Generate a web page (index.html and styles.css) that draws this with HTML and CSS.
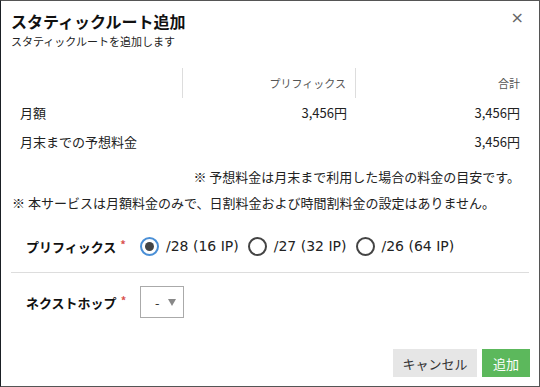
FILE: index.html
```html
<!DOCTYPE html>
<html lang="ja">
<head>
    <meta charset="UTF-8">
    <title>スタティックルート追加</title>
    <link rel="stylesheet" href="styles.css">
</head>
<body>
    <div class="dialog">
        <div class="dialog-header">
            <h2>スタティックルート追加</h2>
            <p class="subtitle">スタティックルートを追加します</p>
            <span class="close">&times;</span>
        </div>

        <!-- Price table -->
        <div class="price-table">
            <div class="cell head"></div>
            <div class="cell head num">プリフィックス</div>
            <div class="cell head num last">合計</div>

            <div class="cell">月額</div>
            <div class="cell num">3,456円</div>
            <div class="cell num last">3,456円</div>

            <div class="cell">月末までの予想料金</div>
            <div class="cell num"></div>
            <div class="cell num last">3,456円</div>
        </div>

        <p class="note note-right">※ 予想料金は月末まで利用した場合の料金の目安です。</p>
        <p class="note">※ 本サービスは月額料金のみで、日割料金および時間割料金の設定はありません。</p>

        <!-- Form -->
        <div class="form-row bordered">
            <label class="form-label">プリフィックス<span class="req">*</span></label>
            <div class="radio-group">
                <label class="radio"><input type="radio" name="prefix" checked><span>/28 (16 IP)</span></label>
                <label class="radio"><input type="radio" name="prefix"><span>/27 (32 IP)</span></label>
                <label class="radio"><input type="radio" name="prefix"><span>/26 (64 IP)</span></label>
            </div>
        </div>
        <div class="form-row">
            <label class="form-label">ネクストホップ<span class="req">*</span></label>
            <div class="select-box">
                <span class="select-value">-</span>
                <span class="caret"></span>
            </div>
        </div>

        <div class="dialog-footer">
            <button class="btn btn-cancel">キャンセル</button>
            <button class="btn btn-add">追加</button>
        </div>
    </div>
</body>
</html>
```

FILE: styles.css
```css
body {
    margin: 0;
    padding: 0;
    background: #fff;
    font-family: "Noto Sans CJK JP", "Noto Sans", sans-serif;
    font-size: 13px;
    color: #222;
}
.dialog {
    position: relative;
    width: 540px;
    height: 387px;
    box-sizing: border-box;
    border: 1px solid #555;
    border-left-color: #1a1f24;
    background: #fff;
    display: flex;
    flex-direction: column;
}
.dialog-header {
    position: relative;
    padding: 10px 10px 0 10px;
}
.dialog-header h2 {
    margin: 0 0 3px 0;
    font-size: 16px;
    line-height: 20px;
    font-weight: bold;
    color: #111;
}
.subtitle {
    margin: 0;
    font-size: 11px;
    line-height: 14px;
    color: #222;
}
.close {
    position: absolute;
    top: 8px;
    right: 15px;
    font-family: "DejaVu Sans", sans-serif;
    font-size: 16px;
    line-height: 18px;
    color: #666;
}
.price-table {
    display: grid;
    grid-template-columns: 172px 173px 1fr;
    margin: 20px 10px 0 10px;
}
.cell {
    height: 29px;
    line-height: 29px;
    padding: 0 9px;
    white-space: nowrap;
}
.cell.num {
    text-align: right;
}
.cell.head {
    height: 30px;
    line-height: 30px;
    font-size: 11px;
    color: #555;
    border-right: 1px solid #ddd;
}
.cell.head.last {
    border-right: none;
}
.note {
    margin: 0;
    line-height: 26px;
    padding: 0 10px 0 11px;
}
.note-right {
    text-align: right;
    margin-top: 8px;
    padding-right: 19px;
}
.form-row {
    display: flex;
    align-items: center;
    margin: 0 10px;
    padding-left: 15px;
}
.form-row.bordered {
    height: 52px;
    margin-top: 4px;
    border-bottom: 1px solid #ddd;
}
.form-row + .form-row {
    margin-top: 13px;
}
.form-label {
    width: 114px;
    font-weight: bold;
    color: #111;
}
.req {
    color: #d9534f;
    font-size: 11px;
    margin-left: 4px;
    vertical-align: 3px;
}
.radio-group {
    display: flex;
    gap: 9px;
}
.radio {
    display: flex;
    align-items: center;
    gap: 7px;
}
.radio span {
    font-family: "DejaVu Sans", sans-serif;
    font-size: 14px;
    color: #222;
}
.radio input {
    appearance: none;
    -webkit-appearance: none;
    margin: 0;
    width: 19px;
    height: 19px;
    border: 2px solid #444;
    border-radius: 50%;
    box-sizing: border-box;
    display: flex;
    align-items: center;
    justify-content: center;
}
.radio input:checked {
    border-color: #4a8fd6;
}
.radio input:checked::after {
    content: "";
    width: 9px;
    height: 9px;
    border-radius: 50%;
    background: #444;
}
.select-box {
    width: 44px;
    height: 32px;
    box-sizing: border-box;
    border: 1px solid #aaa;
    display: flex;
    align-items: center;
    padding-left: 14px;
    gap: 8px;
}
.select-value {
    color: #333;
}
.caret {
    width: 0;
    height: 0;
    border-left: 4px solid transparent;
    border-right: 4px solid transparent;
    border-top: 7px solid #888;
}
.dialog-footer {
    margin-top: auto;
    display: flex;
    justify-content: flex-end;
    gap: 5px;
    padding: 0 9px 9px 0;
}
.btn {
    height: 28px;
    border: none;
    font-family: inherit;
    font-size: 13px;
    padding: 0;
    white-space: nowrap;
    cursor: pointer;
}
.btn-cancel {
    width: 84px;
    background: #e6e6e6;
    color: #333;
}
.btn-add {
    width: 48px;
    background: #5cb85c;
    color: #fff;
}
```
